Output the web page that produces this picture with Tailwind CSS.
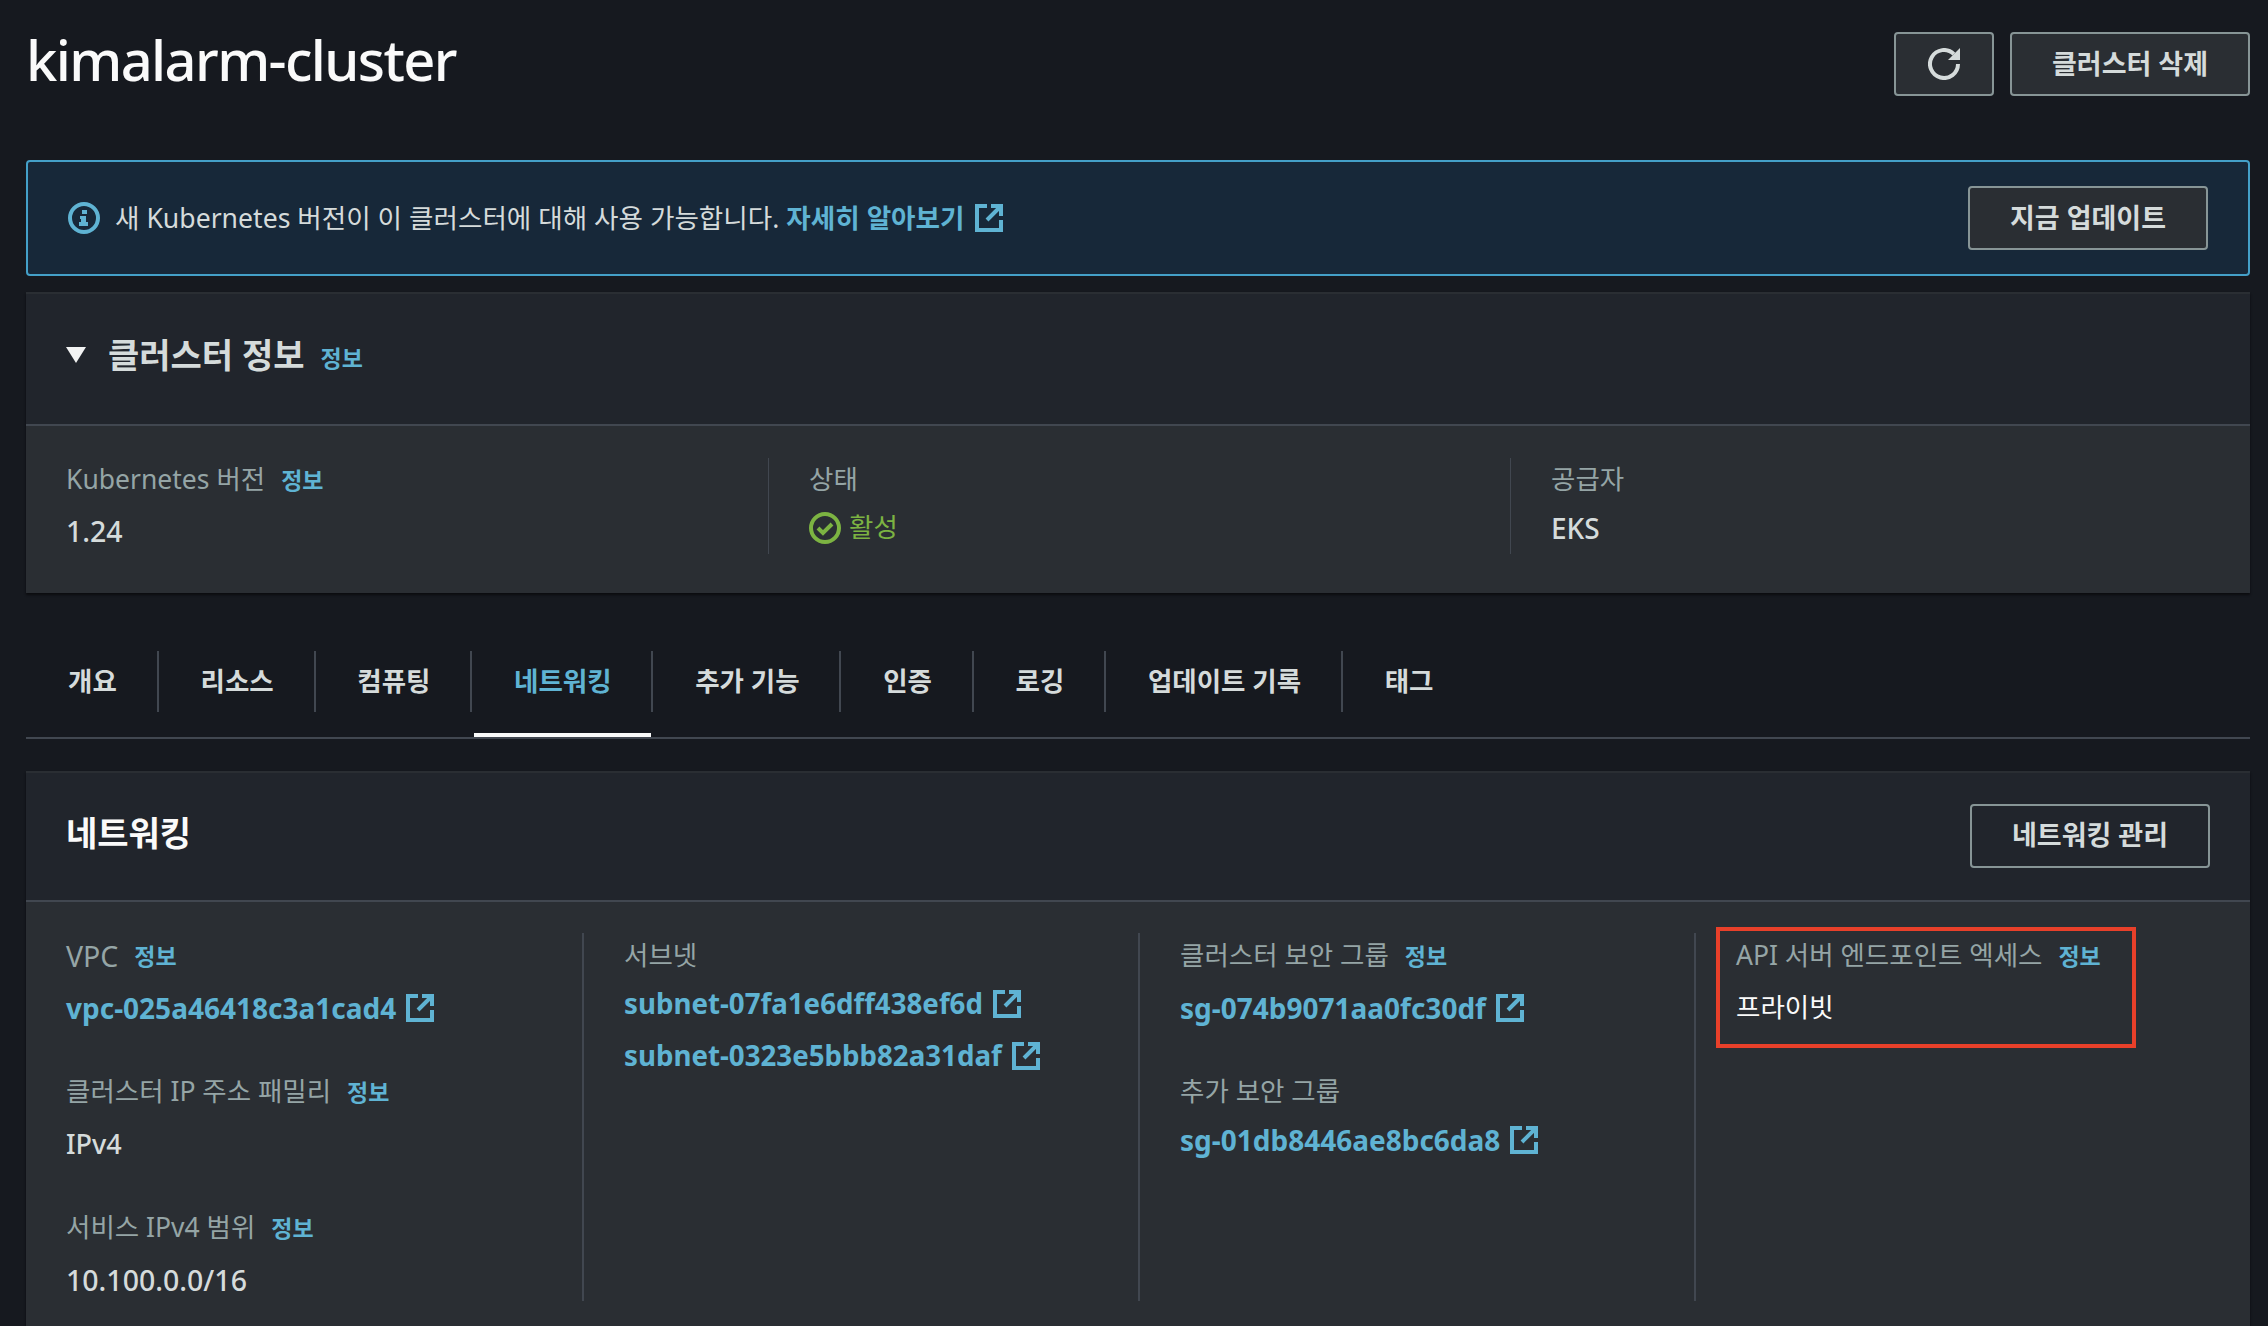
<!doctype html>
<html lang="ko">
<head>
    <meta charset="utf-8">
    <meta name="viewport" content="width=device-width, initial-scale=1">
    <script src="https://cdn.jsdelivr.net/npm/@tailwindcss/browser@4"></script>
</head>
<body class="bg-[#16191f] h-screen overflow-hidden font-['Noto_Sans','Noto_Sans_CJK_KR',sans-serif] text-[27px] text-[#d5dbdb]">
<div class="pl-[26px] pr-[18px]">

    <!-- Header -->
    <div class="flex items-start justify-between h-[160px]">
        <h1 class="text-[56px] leading-[64px] mt-[27px] text-[#fafafa] font-medium tracking-[-1.6px]">kimalarm-cluster</h1>
        <div class="flex gap-4 mt-[32px]">
            <button class="w-[100px] h-[64px] flex items-center justify-center bg-[#2a2e33] border-2 border-[#879596] rounded-[4px] text-[#d5dbdb]">
                <svg class="w-8 h-8" viewBox="0 0 32 32" fill="none"><path d="M30 16A14 14 0 1 1 25.9 6.1" stroke="currentColor" stroke-width="4"/><path d="M32 0v12H20z" fill="currentColor"/></svg>
            </button>
            <button class="w-[240px] h-[64px] bg-[#2a2e33] border-2 border-[#879596] rounded-[4px] font-bold text-[#d5dbdb]">클러스터 삭제</button>
        </div>
    </div>

    <!-- Banner -->
    <div class="h-[116px] flex items-center justify-between bg-[#172839] border-2 border-[#44a0c8] rounded-[4px] pl-[40px] pr-[40px]">
        <div class="flex items-center gap-[15px] text-[26.6px] text-[#d5dbdb]">
            <svg class="w-8 h-8 text-[#5fb3d3]" viewBox="0 0 32 32" fill="none"><circle cx="16" cy="16" r="14" stroke="currentColor" stroke-width="4"/><rect x="14" y="8" width="5" height="4" fill="currentColor"/><path d="M12 14h6v6h2v4h-9v-4h2v-3h-1z" fill="currentColor"/></svg>
            <span class="pt-[2px]">새 Kubernetes 버전이 이 클러스터에 대해 사용 가능합니다. <a class="font-bold text-[#5fb3d3]">자세히 알아보기</a></span>
            <svg class="w-7 h-7 -ml-[5px] text-[#5fb3d3]" viewBox="0 0 28 28" fill="none" stroke="currentColor" stroke-width="4"><path d="M12 2H2v24h24V16M16 2h10v10M26 2 12 16"/></svg>
        </div>
        <button class="w-[240px] h-[64px] text-[27px] bg-[#2a2e33] border-2 border-[#879596] rounded-[4px] font-bold text-[#d5dbdb]">지금 업데이트</button>
    </div>

    <!-- Cluster info -->
    <div class="mt-[16px] shadow-[0_2px_2px_#0b0c0f]">
        <div class="h-[132px] bg-[#21252c] border-t-2 border-[#2a2e33] flex items-center pl-[40px] pb-[8px]">
            <svg class="w-[20px] h-[16px] text-[#f2f3f3]" viewBox="0 0 20 16"><path d="M0 0h20L10 16z" fill="currentColor"/></svg>
            <h2 class="ml-[22px] text-[34px] font-bold text-[#d5dbdb]">클러스터 정보</h2>
            <a class="ml-[16px] text-[23px] font-bold text-[#5fb3d3] mt-[6px]">정보</a>
        </div>
        <div class="h-[169px] bg-[#2a2e33] border-t-2 border-[#414750] pt-[32px] grid grid-cols-[743px_742px_1fr]">
            <div class="h-[96px] pl-[40px] border-r border-[#414750]">
                <div class="h-[40px] mt-[2px] flex items-center gap-[16px] text-[#95a5a6] text-[26.5px]">Kubernetes 버전 <a class="text-[23px] font-bold text-[#5fb3d3]">정보</a></div>
                <div class="mt-[11px] h-[40px] flex items-center text-[28.5px] font-medium text-[#d5dbdb]">1.24</div>
            </div>
            <div class="h-[96px] pl-[40px] border-r border-[#414750]">
                <div class="h-[40px] mt-[2px] flex items-center text-[#95a5a6] text-[26.5px]">상태</div>
                <div class="mt-[8px] h-[40px] flex items-center gap-[8px] text-[#7cb342]">
                    <svg class="w-8 h-8" viewBox="0 0 32 32" fill="none" stroke="currentColor" stroke-width="4"><circle cx="16" cy="16" r="14"/><path d="M9 16l5 5 9-9"/></svg>
                    <span class="text-[26.5px]">활성</span>
                </div>
            </div>
            <div class="h-[96px] pl-[40px]">
                <div class="h-[40px] mt-[2px] flex items-center text-[#95a5a6] text-[26.5px]">공급자</div>
                <div class="mt-[8px] h-[40px] flex items-center text-[28px] font-medium text-[#d5dbdb]">EKS</div>
            </div>
        </div>
    </div>

    <!-- Tabs -->
    <div class="mt-[58px] h-[88px] flex border-b-2 border-[#414750] font-bold text-[#d5dbdb] text-[26.5px]">
        <div class="h-[61px] pl-[42px] pr-[40px] flex items-center border-r-2 border-[#414750]">개요</div>
        <div class="h-[61px] pl-[41.8px] pr-[39.8px] flex items-center border-r-2 border-[#414750]">리소스</div>
        <div class="h-[61px] pl-[41.8px] pr-[39.8px] flex items-center border-r-2 border-[#414750]">컴퓨팅</div>
        <div class="relative h-[61px] pl-[41.8px] pr-[39.8px] flex items-center border-r-2 border-[#414750] text-[#5fb3d3]">네트워킹
            <span class="absolute left-[2px] right-0 top-[82px] h-[4px] bg-[#fafafa]"></span>
        </div>
        <div class="h-[61px] pl-[41.8px] pr-[39.8px] flex items-center border-r-2 border-[#414750]">추가 기능</div>
        <div class="h-[61px] pl-[41.8px] pr-[39.8px] flex items-center border-r-2 border-[#414750]">인증</div>
        <div class="h-[61px] pl-[41.8px] pr-[39.8px] flex items-center border-r-2 border-[#414750]">로깅</div>
        <div class="h-[61px] pl-[41.8px] pr-[39.8px] flex items-center border-r-2 border-[#414750]">업데이트 기록</div>
        <div class="h-[61px] pl-[41.8px] pr-[39.8px] flex items-center">태그</div>
    </div>

    <!-- Networking -->
    <div class="mt-[32px] shadow-[0_2px_2px_#0b0c0f]">
        <div class="h-[129px] bg-[#21252c] border-t-2 border-[#2a2e33] flex items-center justify-between pl-[40px] pr-[40px]">
            <h2 class="text-[34px] font-bold text-[#fafafa] mb-[6px]">네트워킹</h2>
            <button class="w-[240px] h-[64px] mb-[2px] text-[27px] border-2 border-[#879596] rounded-[4px] font-bold text-[#d5dbdb]">네트워킹 관리</button>
        </div>
        <div class="h-[430px] bg-[#2a2e33] border-t-2 border-[#414750] pt-[31px] grid grid-cols-[558px_556px_556px_1fr]">
            <div class="h-[368px] pl-[40px] pt-[3px] border-r-2 border-[#414750]">
                <div class="h-[40px] flex items-center gap-[16px] text-[#95a5a6] text-[26.5px]"><span class="text-[28.5px]">VPC</span> <a class="text-[23px] font-bold text-[#5fb3d3]">정보</a></div>
                <div class="mt-[12px] h-[40px] flex items-center gap-[10px] text-[28px] font-bold text-[#5fb3d3]">vpc-025a46418c3a1cad4
                    <svg class="w-7 h-7" viewBox="0 0 28 28" fill="none" stroke="currentColor" stroke-width="4"><path d="M12 2H2v24h24V16M16 2h10v10M26 2 12 16"/></svg>
                </div>
                <div class="mt-[44px] h-[40px] flex items-center gap-[16px] text-[#95a5a6] text-[26.5px]">클러스터 IP 주소 패밀리 <a class="text-[23px] font-bold text-[#5fb3d3]">정보</a></div>
                <div class="mt-[12px] h-[40px] flex items-center font-medium text-[#d5dbdb]">IPv4</div>
                <div class="mt-[44px] h-[40px] flex items-center gap-[16px] text-[#95a5a6] text-[26.5px]">서비스 IPv4 범위 <a class="text-[23px] font-bold text-[#5fb3d3]">정보</a></div>
                <div class="mt-[12px] h-[40px] flex items-center text-[28.5px] font-medium text-[#d5dbdb]">10.100.0.0/16</div>
            </div>
            <div class="h-[368px] pl-[40px] pt-[3px] border-r-2 border-[#414750]">
                <div class="h-[40px] flex items-center text-[#95a5a6] text-[26.5px]">서브넷</div>
                <div class="mt-[8px] h-[40px] flex items-center gap-[10px] text-[27.7px] font-bold text-[#5fb3d3]">subnet-07fa1e6dff438ef6d
                    <svg class="w-7 h-7" viewBox="0 0 28 28" fill="none" stroke="currentColor" stroke-width="4"><path d="M12 2H2v24h24V16M16 2h10v10M26 2 12 16"/></svg>
                </div>
                <div class="mt-[12px] h-[40px] flex items-center gap-[10px] text-[27.7px] font-bold text-[#5fb3d3]">subnet-0323e5bbb82a31daf
                    <svg class="w-7 h-7" viewBox="0 0 28 28" fill="none" stroke="currentColor" stroke-width="4"><path d="M12 2H2v24h24V16M16 2h10v10M26 2 12 16"/></svg>
                </div>
            </div>
            <div class="h-[368px] pl-[40px] pt-[3px] border-r-2 border-[#414750]">
                <div class="h-[40px] flex items-center gap-[16px] text-[#95a5a6] text-[26.5px]">클러스터 보안 그룹 <a class="text-[23px] font-bold text-[#5fb3d3]">정보</a></div>
                <div class="mt-[12px] h-[40px] flex items-center gap-[10px] text-[28px] font-bold text-[#5fb3d3]">sg-074b9071aa0fc30df
                    <svg class="w-7 h-7" viewBox="0 0 28 28" fill="none" stroke="currentColor" stroke-width="4"><path d="M12 2H2v24h24V16M16 2h10v10M26 2 12 16"/></svg>
                </div>
                <div class="mt-[44px] h-[40px] flex items-center text-[#95a5a6] text-[26.5px]">추가 보안 그룹</div>
                <div class="mt-[8px] h-[40px] flex items-center gap-[10px] text-[28px] font-bold text-[#5fb3d3]">sg-01db8446ae8bc6da8
                    <svg class="w-7 h-7" viewBox="0 0 28 28" fill="none" stroke="currentColor" stroke-width="4"><path d="M12 2H2v24h24V16M16 2h10v10M26 2 12 16"/></svg>
                </div>
            </div>
            <div class="relative h-[368px] pl-[40px] pt-[3px]">
                <div class="h-[40px] flex items-center gap-[16px] text-[#95a5a6] text-[26.5px]">API 서버 엔드포인트 엑세스 <a class="text-[23px] font-bold text-[#5fb3d3]">정보</a></div>
                <div class="mt-[12px] h-[40px] flex items-center text-[#fafafa] text-[26.5px]">프라이빗</div>
                <!-- annotation -->
                <div class="absolute left-[20px] top-[-6px] w-[420px] h-[121px] border-4 border-[#e8402a]"></div>
            </div>
        </div>
    </div>
</div>
</body>
</html>
